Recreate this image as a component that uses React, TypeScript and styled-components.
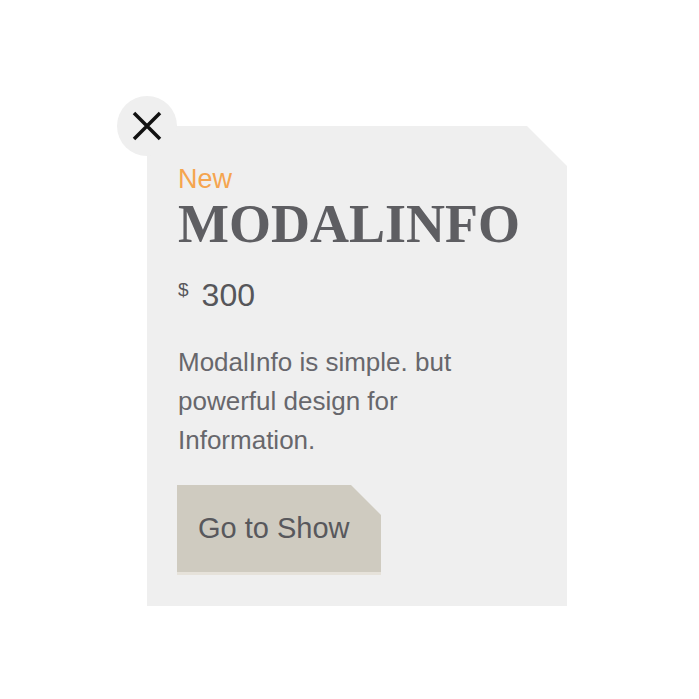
import React from "react";
import styled, { createGlobalStyle } from "styled-components";

const GlobalStyle = createGlobalStyle`
  html, body { margin: 0; padding: 0; background: #ffffff; }
  body { font-family: "Liberation Sans", Arial, sans-serif; }
`;

const Page = styled.div`
  width: 699px;
  height: 699px;
  box-sizing: border-box;
  padding: 126px 0 0 147px;
`;

const Holder = styled.div`
  position: relative;
  width: 420px;
`;

const Card = styled.div`
  box-sizing: border-box;
  width: 420px;
  height: 480px;
  background: #efefef;
  padding: 38px 30px 0 31px;
  display: flex;
  flex-direction: column;
  align-items: flex-start;
  clip-path: polygon(0 0, calc(100% - 40px) 0, 100% 40px, 100% 100%, 0 100%);
`;

const CloseButton = styled.button`
  position: absolute;
  left: -30px;
  top: -30px;
  width: 60px;
  height: 60px;
  border-radius: 50%;
  border: none;
  padding: 0;
  background: #efefef;
  display: flex;
  align-items: center;
  justify-content: center;
  cursor: pointer;
`;

const Badge = styled.div`
  font-size: 27px;
  line-height: 30px;
  color: #f5a54f;
`;

const Title = styled.h1`
  margin: 0;
  font-family: "Liberation Serif", "Times New Roman", serif;
  font-weight: 700;
  font-size: 54px;
  line-height: 60px;
  color: #5e5e62;
`;

const Price = styled.div`
  margin-top: 23px;
  display: flex;
  align-items: flex-start;
  gap: 13px;
  color: #56565a;
`;

const Currency = styled.span`
  font-size: 19px;
  line-height: 26px;
`;

const Amount = styled.span`
  font-size: 32px;
  line-height: 36px;
`;

const Description = styled.p`
  margin: 30px 0 0;
  max-width: 300px;
  font-size: 26px;
  line-height: 39px;
  color: #67676c;
`;

const ShowButton = styled.button`
  margin-top: 25px;
  margin-left: -1px;
  box-sizing: border-box;
  width: 204px;
  height: 90px;
  padding: 0 0 0 21px;
  border: none;
  border-bottom: 3px solid #e6e2da;
  background: #cfcbc0;
  text-align: left;
  font-family: "Liberation Sans", Arial, sans-serif;
  font-size: 29px;
  color: #58585c;
  cursor: pointer;
  clip-path: polygon(0 0, calc(100% - 30px) 0, 100% 30px, 100% 100%, 0 100%);
`;

export default function App() {
  return (
    <>
      <GlobalStyle />
      <Page>
        <Holder>
          <Card>
            <Badge>New</Badge>
            <Title>MODALINFO</Title>
            <Price>
              <Currency>$</Currency>
              <Amount>300</Amount>
            </Price>
            <Description>
              ModalInfo is simple. but powerful design for Information.
            </Description>
            <ShowButton>Go to Show</ShowButton>
          </Card>
          <CloseButton aria-label="Close">
            <svg width="30" height="30" viewBox="0 0 30 30">
              <path d="M2 2 L28 28 M28 2 L2 28" stroke="#111" strokeWidth="3.5" />
            </svg>
          </CloseButton>
        </Holder>
      </Page>
    </>
  );
}
